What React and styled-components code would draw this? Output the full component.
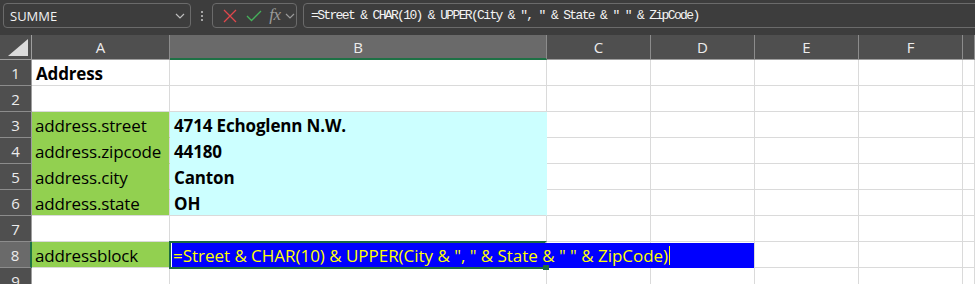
import React from "react";
import styled, { createGlobalStyle } from "styled-components";

const Global = createGlobalStyle`
  html, body { margin: 0; padding: 0; background: #ffffff; }
  body { width: 975px; height: 284px; overflow: hidden; font-family: "Open Sans", "Noto Sans", sans-serif; }
`;

const Page = styled.div`
  display: flex;
  flex-direction: column;
  width: 975px;
  height: 284px;
  overflow: hidden;
`;

const Toolbar = styled.div`
  display: flex;
  flex-shrink: 0;
  align-items: flex-start;
  height: 35px;
  padding: 3px 0 0 3px;
  box-sizing: border-box;
  background: #3d3d3d;
`;

const NameBox = styled.div`
  display: flex;
  align-items: center;
  justify-content: space-between;
  box-sizing: border-box;
  width: 188px;
  height: 25px;
  border: 1px solid #6b6b6b;
  border-radius: 4px;
  padding: 0 5px 0 6px;
  color: #f2f2f2;
  font-family: "Open Sans", "Noto Sans", sans-serif;
  font-size: 13px;
`;

const Dots = styled.div`
  display: flex;
  flex-direction: column;
  justify-content: center;
  gap: 2px;
  width: 21px;
  height: 25px;
  align-items: center;
  & > span {
    width: 2px;
    height: 2px;
    background: #c8c8c8;
    border-radius: 1px;
  }
`;

const ButtonGroup = styled.div`
  display: flex;
  align-items: center;
  box-sizing: border-box;
  width: 85px;
  height: 25px;
  border: 1px solid #6b6b6b;
  border-radius: 4px;
  padding: 0 0 0 5px;
`;

const IconBtn = styled.div`
  display: flex;
  align-items: center;
  justify-content: center;
  width: ${(p) => p.$w || 24}px;
  height: 23px;
`;

const Fx = styled.span`
  font-family: "Liberation Serif", "DejaVu Serif", serif;
  font-style: italic;
  font-size: 17px;
  color: #9a9a9a;
  letter-spacing: -0.5px;
  line-height: 1;
  margin-top: -2px;
`;

const FormulaBox = styled.div`
  display: flex;
  align-items: center;
  box-sizing: border-box;
  margin-left: 6px;
  flex: 1;
  height: 25px;
  margin-right: -10px;
  border: 1px solid #6b6b6b;
  border-radius: 4px;
  padding-left: 7px;
  color: #f4f4f4;
  font-family: "Liberation Mono", "DejaVu Sans Mono", monospace;
  font-size: 13px;
  letter-spacing: -1.65px;
  white-space: pre;
`;

const Sheet = styled.div`
  display: grid;
  flex-shrink: 0;
  grid-template-columns: 32px 138px 377px 104px 104px 104px 104px 1fr;
  grid-template-rows: 25px repeat(9, 26px);
  background: #ffffff;
`;

const Corner = styled.div`
  box-sizing: border-box;
  background: #4f4f4f;
  border-right: 1px solid #9e9e9e;
  border-bottom: 1px solid #9e9e9e;
  display: flex;
  align-items: flex-end;
  justify-content: flex-end;
  padding: 0 3px 3px 0;
`;

const ColHead = styled.div`
  box-sizing: border-box;
  display: flex;
  align-items: center;
  justify-content: center;
  background: ${(p) => (p.$sel ? "#6a6a6a" : "#4f4f4f")};
  border-right: 1px solid #8c8c8c;
  border-bottom: ${(p) => (p.$sel ? "2px solid #1e7145" : "1px solid #9e9e9e")};
  color: #ececec;
  font-family: "Open Sans", "Noto Sans", sans-serif;
  font-size: 15px;
  padding-top: ${(p) => (p.$sel ? "1px" : "0")};
`;

const RowHead = styled.div`
  box-sizing: border-box;
  display: flex;
  align-items: center;
  justify-content: center;
  background: ${(p) => (p.$sel ? "#6a6a6a" : "#4f4f4f")};
  border-right: ${(p) => (p.$sel ? "2px solid #1e7145" : "1px solid #9e9e9e")};
  border-bottom: 1px solid #8c8c8c;
  color: #ececec;
  font-family: "Open Sans", "Noto Sans", sans-serif;
  font-size: 15px;
`;

const fills = { green: "#92d050", cyan: "#ccffff", none: "#ffffff" };

const Cell = styled.div`
  position: relative;
  box-sizing: border-box;
  display: flex;
  align-items: center;
  padding-top: 1px;
  padding-left: ${(p) => (p.$bold ? 4 : 3)}px;
  background: ${(p) => fills[p.$fill || "none"]};
  border-right: 1px solid ${(p) => (p.$fill === "cyan" ? "#ccffff" : "#dadada")};
  border-bottom: 1px solid ${(p) => (p.$fill && p.$fill !== "none" && !p.$lastFill ? fills[p.$fill] : "#dadada")};
  color: #000;
  font-family: "Open Sans", "Noto Sans", sans-serif;
  font-size: 17px;
  letter-spacing: -0.15px;
  font-weight: ${(p) => (p.$bold ? 700 : 400)};
  white-space: nowrap;
`;

const Editor = styled.div`
  position: absolute;
  left: 2px;
  top: 1px;
  width: 582px;
  height: 25px;
  box-sizing: border-box;
  background: #0000ff;
  color: #ffff00;
  display: flex;
  align-items: center;
  padding-left: 1px;
  font-family: "Open Sans", "Noto Sans", sans-serif;
  font-size: 17px;
  font-weight: 400;
  letter-spacing: -0.03px;
  white-space: pre;
  z-index: 1;
`;

const Caret = styled.span`
  display: inline-block;
  width: 1px;
  height: 19px;
  background: #ffff00;
  margin-left: 1px;
`;

const ActiveFrame = styled.div`
  position: absolute;
  left: -1px;
  top: -1px;
  width: 378px;
  height: 28px;
  box-sizing: border-box;
  border: 2px solid #1e6b41;
  border-right-color: transparent;
  pointer-events: none;
  z-index: 2;
`;

const FillHandle = styled.div`
  position: absolute;
  right: -3px;
  bottom: -3px;
  width: 6px;
  height: 5px;
  background: #1e6b41;
  z-index: 3;
`;

const Chevron = ({ color = "#bdbdbd" }) => (
  <svg width="10" height="6" viewBox="0 0 10 6">
    <path d="M1 1 L5 5 L9 1" fill="none" stroke={color} strokeWidth="1.2" />
  </svg>
);

const cols = ["A", "B", "C", "D", "E", "F", ""];

const rows = [
  { a: "Address", aBold: true, aFill: "none", b: "", bFill: "none" },
  { a: "", aFill: "none", b: "", bFill: "none" },
  { a: "address.street", aFill: "green", b: "4714 Echoglenn N.W.", bFill: "cyan" },
  { a: "address.zipcode", aFill: "green", b: "44180", bFill: "cyan" },
  { a: "address.city", aFill: "green", b: "Canton", bFill: "cyan" },
  { a: "address.state", aFill: "green", b: "OH", bFill: "cyan", last: true },
  { a: "", aFill: "none", b: "", bFill: "none" },
  { a: "addressblock", aFill: "green", b: "", bFill: "none", active: true, last: true },
  { a: "", aFill: "none", b: "", bFill: "none" },
];

const formula = `=Street & CHAR(10) & UPPER(City & ", " & State & " " & ZipCode)`;

export default function App() {
  return (
    <Page>
      <Global />
      <Toolbar>
        <NameBox>
          <span>SUMME</span>
          <Chevron />
        </NameBox>
        <Dots>
          <span />
          <span />
          <span />
        </Dots>
        <ButtonGroup>
          <IconBtn $w={24}>
            <svg width="14" height="14" viewBox="0 0 14 14">
              <path d="M1 1 L13 13 M13 1 L1 13" stroke="#e0474c" strokeWidth="1.3" fill="none" />
            </svg>
          </IconBtn>
          <IconBtn $w={24}>
            <svg width="16" height="12" viewBox="0 0 16 12">
              <path d="M1 6 L5.5 10.5 L15 1" stroke="#45b05a" strokeWidth="1.3" fill="none" />
            </svg>
          </IconBtn>
          <IconBtn $w={18}>
            <Fx>fx</Fx>
          </IconBtn>
          <IconBtn $w={12}>
            <Chevron color="#9a9a9a" />
          </IconBtn>
        </ButtonGroup>
        <FormulaBox>{formula}</FormulaBox>
      </Toolbar>
      <Sheet>
        <Corner>
          <svg width="20" height="17" viewBox="0 0 20 17">
            <path d="M20 0 L20 17 L0 17 Z" fill="#dcdcdc" />
          </svg>
        </Corner>
        {cols.map((c, i) => (
          <ColHead key={i} $sel={c === "B"}>
            {c}
          </ColHead>
        ))}
        {rows.map((r, i) => (
          <React.Fragment key={i}>
            <RowHead $sel={r.active}>{i + 1}</RowHead>
            <Cell $fill={r.aFill} $bold={r.aBold} $lastFill={r.last}>
              {r.a}
            </Cell>
            <Cell $fill={r.bFill} $bold $lastFill={r.last}>
              {r.b}
              {r.active && (
                <>
                  <Editor>
                    {formula}
                    <Caret />
                  </Editor>
                  <ActiveFrame />
                  <FillHandle />
                </>
              )}
            </Cell>
            <Cell />
            <Cell />
            <Cell />
            <Cell />
            <Cell />
          </React.Fragment>
        ))}
      </Sheet>
    </Page>
  );
}
